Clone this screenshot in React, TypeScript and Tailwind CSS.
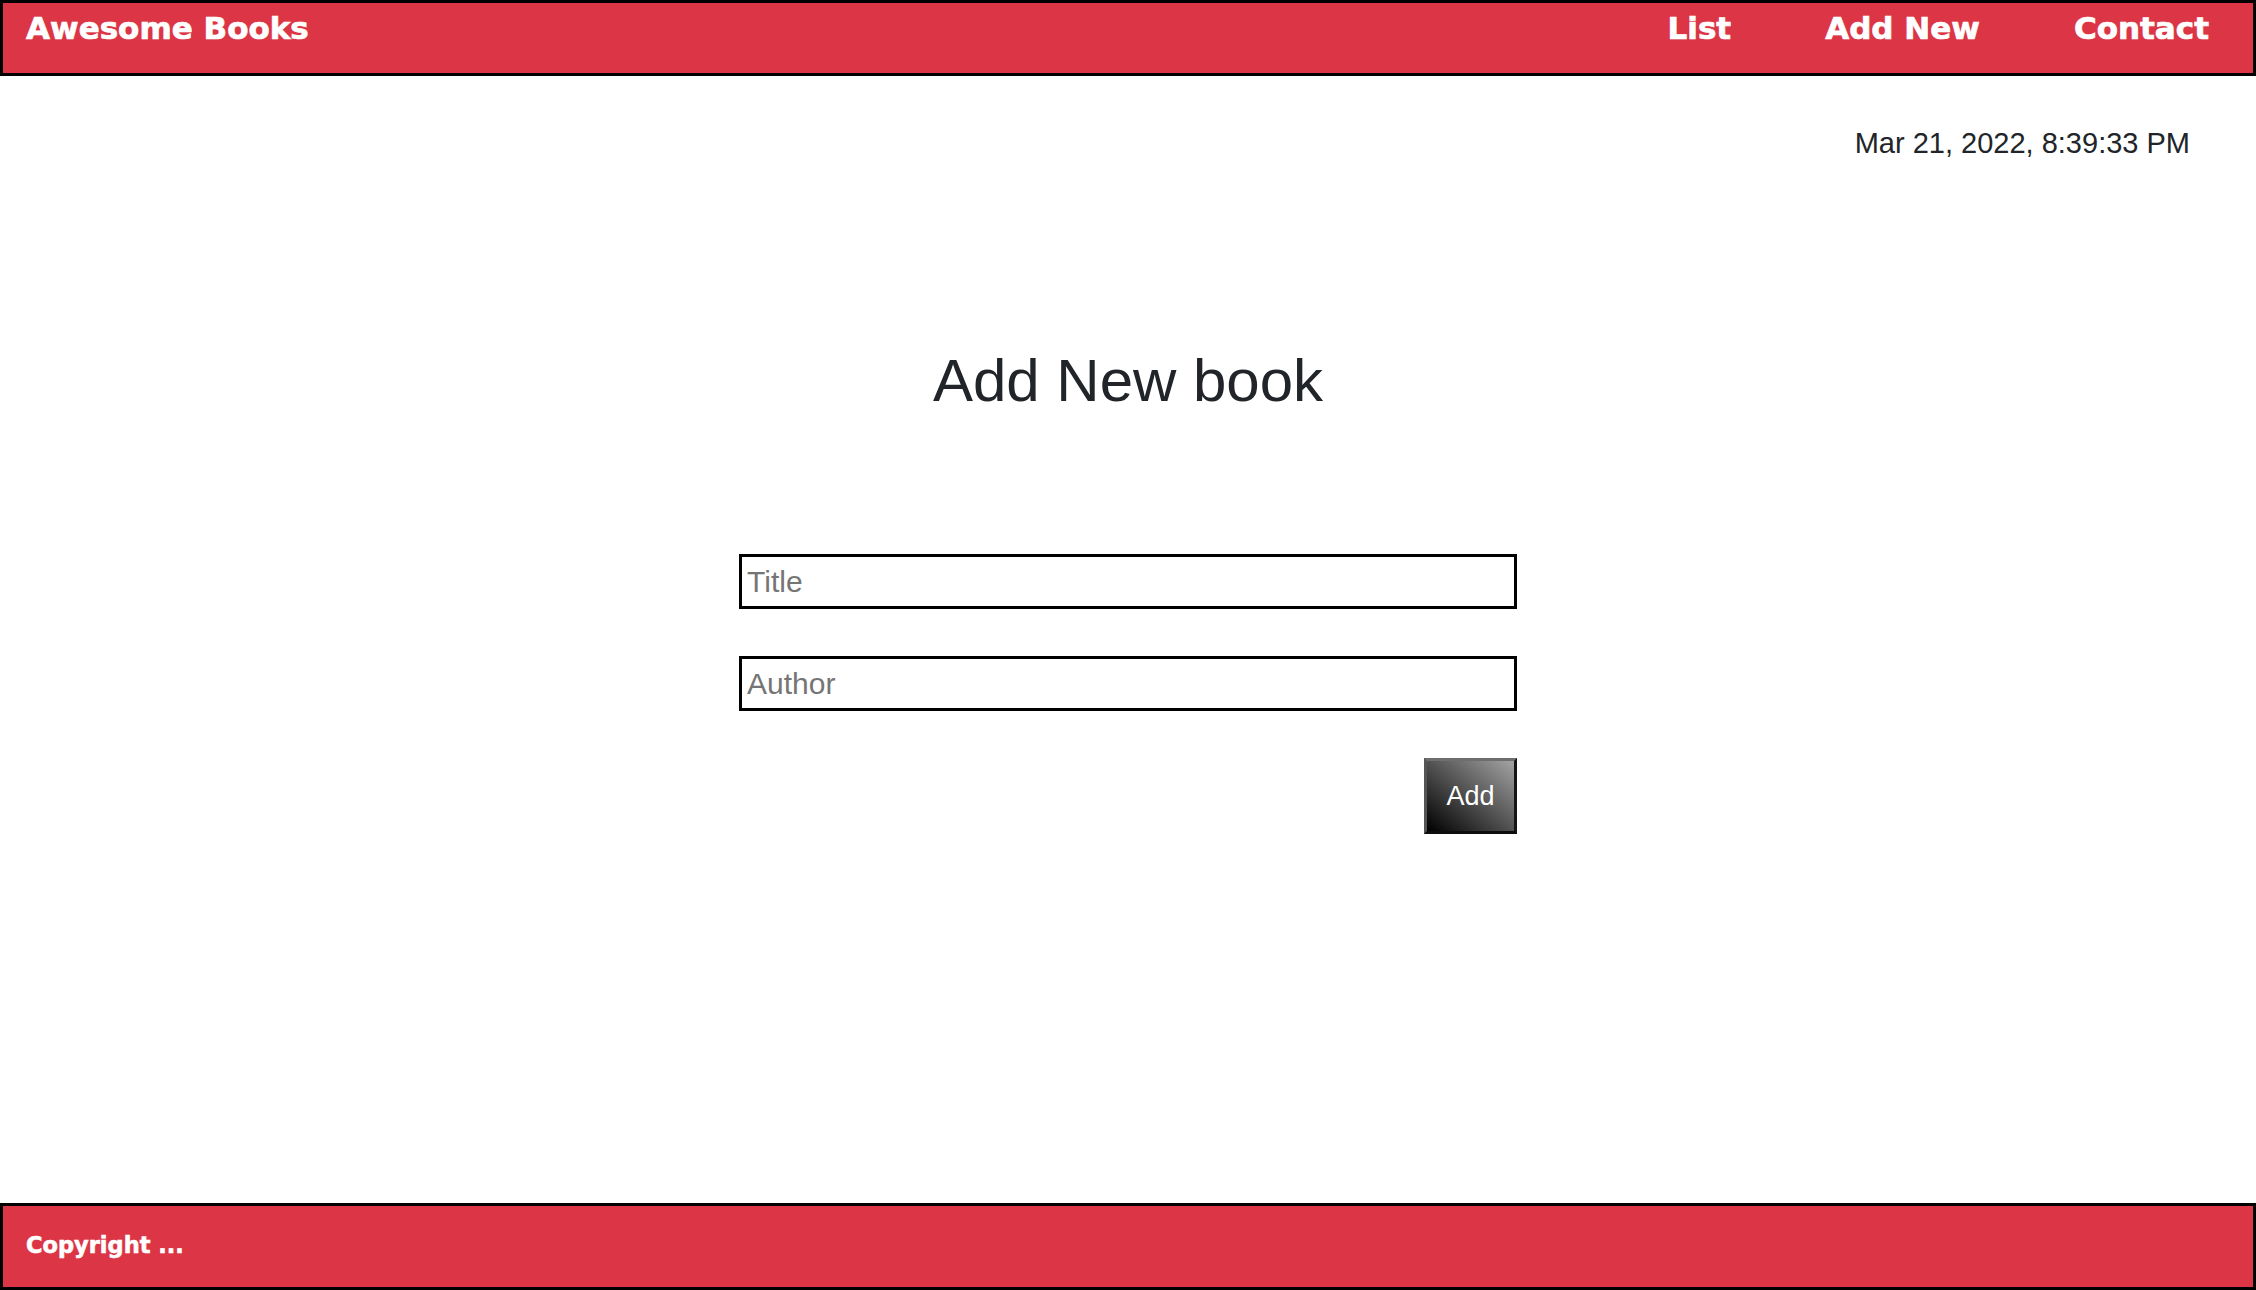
import React from "react";

export default function App() {
  return (
    <div className="flex h-[1290px] w-full flex-col overflow-hidden bg-white font-['Liberation_Sans',Arial,sans-serif] text-[#212529]">
      <header className="box-border flex h-[76px] items-start justify-between border-[3px] border-black bg-[#dc3545] pl-[23px] pr-[44px] pt-[7px] font-['DejaVu_Sans',sans-serif] text-[31px] font-bold leading-[36px] text-white [-webkit-text-stroke:0.7px_white]">
        <div>Awesome Books</div>
        <nav className="flex gap-[94px]">
          <a href="#">List</a>
          <a href="#">Add New</a>
          <a href="#">Contact</a>
        </nav>
      </header>

      <main className="flex flex-1 flex-col">
        <div className="mt-[50px] flex justify-end pr-[66px] text-[29px] leading-[34px]">
          Mar 21, 2022, 8:39:33 PM
        </div>

        <h1 className="mt-[185px] text-center text-[60px] font-normal leading-[72px]">
          Add New book
        </h1>

        <form
          className="mx-auto mt-[137px] flex w-[778px] flex-col"
          onSubmit={(e) => e.preventDefault()}
        >
          <input
            type="text"
            placeholder="Title"
            className="box-border h-[55px] w-full border-[3px] border-black pl-[5px] font-['Liberation_Sans',Arial,sans-serif] text-[30px] text-[#212529] outline-none placeholder:text-[#757575]"
          />
          <input
            type="text"
            placeholder="Author"
            className="mt-[47px] box-border h-[55px] w-full border-[3px] border-black pl-[5px] font-['Liberation_Sans',Arial,sans-serif] text-[30px] text-[#212529] outline-none placeholder:text-[#757575]"
          />
          <div className="mt-[47px] flex justify-end">
            <button
              type="submit"
              className="box-border h-[76px] w-[93px] border-[3px] border-b-[#0d0d0d] border-l-[#555555] border-r-[#151515] border-t-[#6e6e6e] bg-[linear-gradient(to_top_right,#000000,#a3a3a3)] text-[27px] leading-none text-white"
            >
              Add
            </button>
          </div>
        </form>
      </main>

      <footer className="box-border h-[87px] border-[3px] border-black bg-[#dc3545] pl-[23px] pt-[26px] font-['DejaVu_Sans',sans-serif] text-[22.5px] font-bold leading-[27px] text-white [-webkit-text-stroke:0.6px_white]">
        Copyright ...
      </footer>
    </div>
  );
}
